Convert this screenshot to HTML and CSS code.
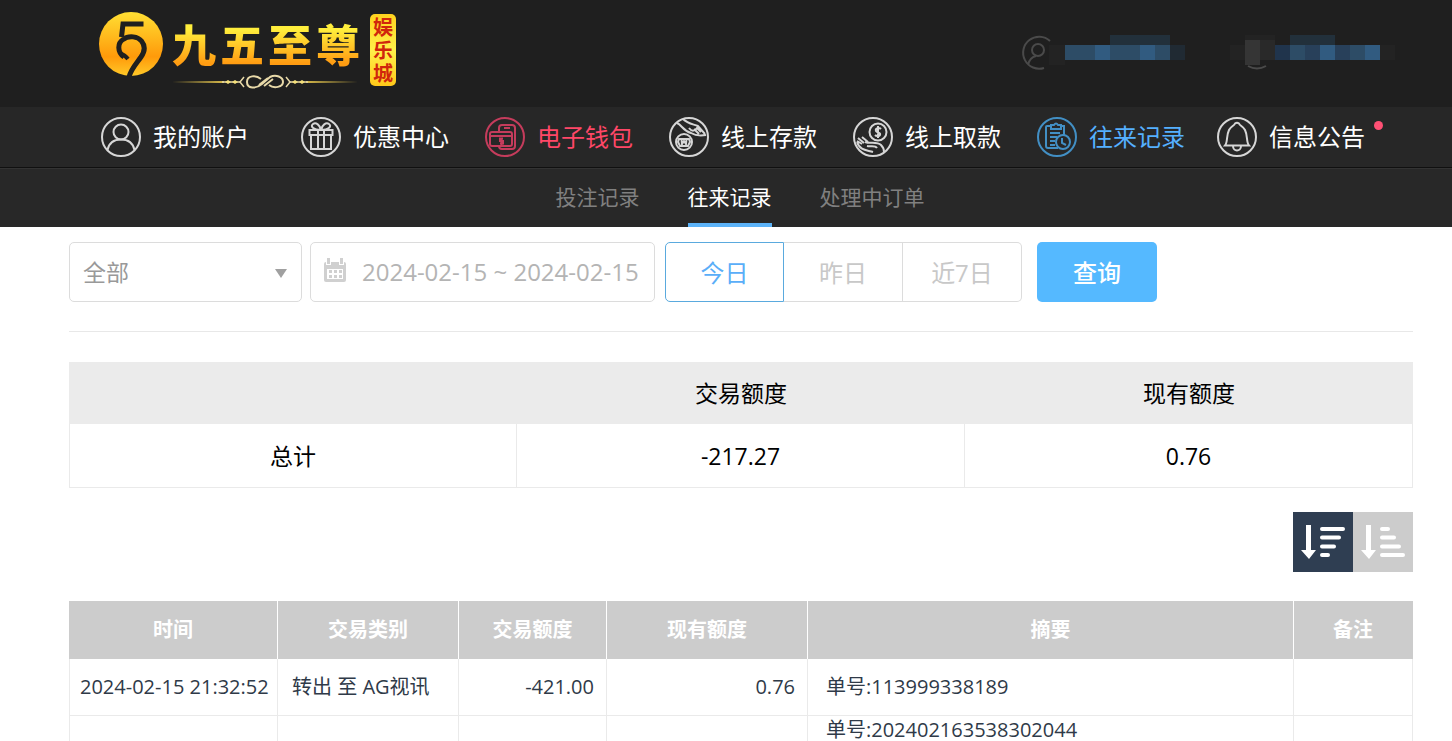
FILE: index.html
```html
<!DOCTYPE html>
<html lang="zh-CN">
<head>
<meta charset="utf-8">
<title>往来记录</title>
<link rel="stylesheet" href="styles.css">
</head>
<body>

<header class="header">
	<a class="logo" href="#home">
		<svg class="emblem" width="66" height="66" viewBox="0 0 66 66">
			<defs>
				<linearGradient id="gold" x1="0" y1="0" x2="0" y2="1">
					<stop offset="0" stop-color="#ffdf33"/>
					<stop offset=".7" stop-color="#ff9a0a"/>
					<stop offset="1" stop-color="#ffc928"/>
				</linearGradient>
			</defs>
			<circle cx="33" cy="33" r="32" fill="url(#gold)"/>
			<path d="M45.500 13H25L23.500 26M26 46C19 41 19.500 32 25 28.500C31 24 40 25.500 43.500 30C47.500 35 46.500 41 43 46C38 53 33 58 31 66" fill="none" stroke="#1f1f1f" stroke-width="5"/>
			<path d="M23 43Q27 44 30 48" fill="none" stroke="#1f1f1f" stroke-width="4"/>
		</svg>
		<span class="brand">
			<span class="brand-name"><span>九</span><span>五</span><span>至</span><span>尊</span></span>
			<svg class="ornament" width="186" height="16" viewBox="0 0 186 16" fill="none" stroke="#e8d9a8">
				<path d="M0 8L52 7V9ZM186 8L134 7V9Z" fill="#d9bb4a" stroke="none"/>
				<path d="M50 8H68M118 8H136" stroke-width="1.500"/>
				<path d="M56 6L59 8L56 10L53 8ZM63 6L66 8L63 10L60 8ZM130 6L133 8L130 10L127 8ZM123 6L126 8L123 10L120 8Z" fill="#f4df7a" stroke="none"/>
				<path d="M72 3L68 8L72 13M114 3L118 8L114 13" stroke-width="1.500"/>
				<path d="M89 5C84 1 75 1 75 8S84 15 90 10L98 3C104 0 111 3 111 8S102 15 97 11M87 11L96 4M92 12L101 5" stroke-width="2"/>
			</svg>
		</span>
		<span class="seal"><span>娱</span><span>乐</span><span>城</span></span>
	</a>
	<div class="user">
		<svg width="375" height="40" viewBox="0 0 375 40" shape-rendering="crispEdges">
			<g fill="none" stroke="#4a4a4a" stroke-width="2" shape-rendering="auto">
				<path d="M30 6A16 16 0 1 0 24 33M8 30C9 25 12 22 16 21"/>
				<circle cx="18" cy="15" r="6"/>
				<path d="M228 31Q237 36 246 31"/>
			</g>
			<path fill="#232323" d="M29 10h16v20H29zM210 10h15v15h-15zM360 10h15v15h-15zM225 0h30v5h-30z"/>
			<path fill="#353535" d="M225 5h15v25h-15z"/>
			<path fill="#292929" d="M240 5h15v20h-15z"/>
			<path fill="#22303b" d="M90 0h60v10H90zM270 0h45v10h-45z"/>
			<path fill="#202a33" d="M150 10h15v15h-15z"/>
			<path fill="#20344c" d="M255 10h15v15h-15z"/>
			<path fill="#2d4c66" d="M45 10h105v15H45zM270 10h90v15h-90z"/>
			<path fill="#28405a" d="M285 10h15v15h-15zM315 10h15v15h-15z"/>
			<path fill="#315b80" d="M75 10h15v15H75zM120 10h15v15h-15zM300 10h15v15h-15zM345 10h15v15h-15z"/>
		</svg>
	</div>
</header>

<nav class="nav">
	<a class="nav-item nav-first" href="#account">
		<svg class="icon" viewBox="0 0 40 40"><circle cx="20" cy="20" r="19"/><circle cx="20" cy="15" r="7.500"/><path d="M6.500 33C8 26 13 22.500 20 22.500S32 26 33.500 33"/></svg>
		<span>我的账户</span>
	</a>
	<a class="nav-item" href="#promo">
		<svg class="icon" viewBox="0 0 40 40"><circle cx="20" cy="20" r="19"/><path d="M8.500 13H31.500V18H8.500ZM10 18V32H30V18M17 13V32M23 13V32M20 13C12 13 9 9 12 7S19 8 20 13C21 8 25 5 28 7S28 13 20 13"/></svg>
		<span>优惠中心</span>
	</a>
	<a class="nav-item red" href="#wallet">
		<svg class="icon" viewBox="0 0 40 40"><circle cx="20" cy="20" r="19"/><path d="M14 15V11Q14 8 17 8H27Q30 8 30 11V29Q30 32 27 32H17Q14 32 14 29M19 11H25M5 17Q5 15 7 15H25Q27 15 27 17V27Q27 29 25 29H7Q5 29 5 27ZM5 19H27M18 21.500H15V24H18V26.500H15M16.500 20.500V28"/></svg>
		<span>电子钱包</span>
	</a>
	<a class="nav-item" href="#deposit">
		<svg class="icon" viewBox="0 0 40 40"><circle cx="20" cy="20" r="19"/><circle cx="15" cy="25" r="8"/><path d="M10 22H20L21 25L19 29H11L9 25ZM12.500 22L13 27L15 24L17 27L17.500 22M8 6C13 8 14 14 22 16C27 19 31 19 37 18M14 2C19 7 24 7 29 9L36 17M20 11C23 15 26 14 28 11L32 15M25 12L30 17"/></svg>
		<span>线上存款</span>
	</a>
	<a class="nav-item" href="#withdraw">
		<svg class="icon" viewBox="0 0 40 40"><circle cx="20" cy="20" r="19"/><circle cx="25" cy="15" r="8.500"/><path d="M28 12C26 10 22 11 23 14C24 16 28 15 27 18C26 20 23 19 22 18M25 9V21M4 24L9 27M5 21L11 26M9 20L15 25M4 25C7 34 14 33 20 35M12 25C17 27 24 24 28 28C31 31 31 33 31 35M14 29C18 30 22 28 24 31"/></svg>
		<span>线上取款</span>
	</a>
	<a class="nav-item blue" href="#records">
		<svg class="icon" viewBox="0 0 40 40"><circle cx="20" cy="20" r="19"/><path d="M14 9H10Q9 9 9 10V29Q9 31 11 31H21M24 9H27V18M14 8H17Q19 5 21 8H24V12H14ZM13 16H23M13 20H20M13 24H18M13 28H18M25 21V26L29 28"/><circle cx="26" cy="25" r="7"/></svg>
		<span>往来记录</span>
	</a>
	<a class="nav-item" href="#notice">
		<svg class="icon" viewBox="0 0 40 40"><circle cx="20" cy="20" r="19"/><path d="M8 28.500H32C29 25 31 19 28 13C26 9 23 9 22 6.500Q20 5 18 6.500C17 9 14 9 12 13C9 19 11 25 8 28.500ZM16 29C16 35 24 35 24 29"/></svg>
		<span>信息公告</span>
		<i class="dot"></i>
	</a>
</nav>

<nav class="subnav">
	<a href="#bets">投注记录</a>
	<a class="active" href="#records">往来记录</a>
	<a href="#pending">处理中订单</a>
</nav>

<main class="content">
	<form class="filters">
		<div class="select">
			<select aria-label="交易类别"><option>全部</option></select>
		</div>
		<label class="date">
			<svg width="26" height="26" viewBox="0 0 26 26">
				<path fill="#d0d0d0" d="M3 4H21Q23 4 23 6V22Q23 24 21 24H3Q1 24 1 22V6Q1 4 3 4Z"/>
				<path fill="#fff" d="M4 11H20V21H4ZM3 0H8V7H3ZM16 0H21V7H16Z"/>
				<path fill="#d0d0d0" d="M4 0H7V6H4ZM17 0H20V6H17ZM6 12h3v3H6zM11 12h3v3h-3zM16 12h3v3h-3zM6 17h3v3H6zM11 17h3v3h-3zM16 17h3v3h-3z"/>
			</svg>
			<input type="text" aria-label="日期" value="2024-02-15 ~ 2024-02-15">
		</label>
		<div class="days">
			<button type="button" class="active">今日</button>
			<button type="button">昨日</button>
			<button type="button">近7日</button>
		</div>
		<button type="button" class="query">查询</button>
	</form>

	<table class="summary">
		<thead>
			<tr><th></th><th>交易额度</th><th>现有额度</th></tr>
		</thead>
		<tbody>
			<tr><td>总计</td><td>-217.27</td><td>0.76</td></tr>
		</tbody>
	</table>

	<div class="sort">
		<button type="button" class="active" aria-label="降序">
			<svg width="60" height="60" viewBox="0 0 60 60"><path d="M13 13H18V38H23L16 47L8 38H13Z"/><path class="bars" d="M29 17H50M29 25.500H46M29 34.500H41M29 43H35"/></svg>
		</button>
		<button type="button" aria-label="升序">
			<svg width="60" height="60" viewBox="0 0 60 60"><path d="M13 13H18V38H23L16 47L8 38H13Z"/><path class="bars" d="M29 17H35M29 25.500H41M29 34.500H46M29 43H50"/></svg>
		</button>
	</div>

	<table class="records">
		<colgroup>
			<col class="c-time"><col class="c-type"><col class="c-amount"><col class="c-balance"><col><col class="c-remark">
		</colgroup>
		<thead>
			<tr><th>时间</th><th>交易类别</th><th>交易额度</th><th>现有额度</th><th>摘要</th><th>备注</th></tr>
		</thead>
		<tbody>
			<tr>
				<td class="time">2024-02-15 21:32:52</td>
				<td>转出 至 AG视讯</td>
				<td class="num">-421.00</td>
				<td class="num">0.76</td>
				<td class="memo">单号:113999338189</td>
				<td></td>
			</tr>
			<tr class="multi">
				<td></td>
				<td></td>
				<td></td>
				<td></td>
				<td class="memo">单号:202402163538302044</td>
				<td></td>
			</tr>
		</tbody>
	</table>
</main>

</body>
</html>
```
FILE: styles.css
```css
* {
	box-sizing: border-box;
}
body {
	margin: 0;
	background: #fff;
	color: #000;
	font-family: "Open Sans", "Noto Sans CJK SC", sans-serif;
	font-size: 20px;
}
a {
	color: inherit;
	text-decoration: none;
}
button, input, select {
	font: inherit;
	color: inherit;
	margin: 0;
	padding: 0;
	border: 0;
	background: none;
}

/* header */
.header {
	display: flex;
	justify-content: space-between;
	height: 107px;
	padding: 11px 57px 0 98px;
	background: #1f1f1f;
}
.logo {
	display: flex;
	align-items: flex-start;
}
.brand {
	display: flex;
	flex-direction: column;
	gap: 3px;
	margin: 8px 0 0 8px;
}
.brand-name {
	display: flex;
	gap: 4px;
	font-size: 44px;
	font-weight: 900;
	line-height: 52px;
}
.brand-name span {
	background: linear-gradient(#ffee3c 20%, #ff9c12 85%);
	-webkit-background-clip: text;
	background-clip: text;
	color: transparent;
}
.seal {
	display: flex;
	flex-direction: column;
	align-items: center;
	gap: 3px;
	width: 26px;
	margin: 3px 0 0 10px;
	padding: 3px 0;
	border-radius: 5px;
	background: linear-gradient(#ffd21e, #fff04a 50%, #ffc81a);
	color: #d0260c;
	font-family: "Noto Sans CJK SC", sans-serif;
	font-size: 20px;
	font-weight: 700;
	line-height: 20px;
}
.user {
	padding-top: 24px;
}

/* main menu */
.nav {
	display: flex;
	gap: 36px;
	height: 61px;
	padding: 0 0 1px 101px;
	background: #272727;
	border-bottom: 1px solid #101010;
	color: #fff;
	font-size: 24px;
	line-height: 32px;
}
.nav-item {
	display: flex;
	align-items: center;
	gap: 12px;
	position: relative;
	white-space: nowrap;
}
.nav-first {
	margin-right: 16px;
}
.icon {
	width: 40px;
	height: 40px;
	fill: none;
	stroke: #d6d6d6;
	stroke-width: 2;
}
.nav-item:last-child {
	margin-left: -4px;
}
.red {
	color: #ff4767;
}
.red .icon {
	stroke: #c53c5c;
}
.blue {
	color: #55b0ff;
}
.blue .icon {
	stroke: #428fc4;
}
.dot {
	position: absolute;
	top: 14px;
	right: -18px;
	width: 9px;
	height: 9px;
	border-radius: 50%;
	background: #ff5074;
}

.subnav {
	display: flex;
	justify-content: center;
	gap: 48px;
	height: 59px;
	padding-left: 28px;
	background: #282828;
	border-top: 1px solid #333;
	color: #808080;
	font-size: 21px;
	line-height: 56px;
}
.subnav .active {
	color: #fff;
	border-bottom: 4px solid #5cb3f8;
}

/* filters */
.content {
	padding: 15px 39px 0 69px;
}
.filters {
	display: flex;
	padding-bottom: 29px;
	border-bottom: 1px solid #e8e8e8;
	font-size: 24px;
}
.select {
	position: relative;
	width: 233px;
	height: 60px;
	margin-right: 8px;
}
.select select {
	width: 100%;
	height: 100%;
	padding: 0 13px;
	appearance: none;
	border: 1px solid #dcdcdc;
	border-radius: 5px;
	color: #999;
	font-size: 23px;
}
.select::after {
	content: "";
	position: absolute;
	top: 27px;
	right: 15px;
	border: 6px solid transparent;
	border-top: 9px solid #a0a0a0;
	border-bottom: 0;
	pointer-events: none;
}
.date {
	display: flex;
	align-items: center;
	gap: 13px;
	width: 345px;
	height: 60px;
	margin-right: 10px;
	padding: 0 0 2px 12px;
	border: 1px solid #dcdcdc;
	border-radius: 5px;
	color: #b4b4b4;
}
.date input {
	flex: 1;
	min-width: 0;
}
.days {
	display: flex;
	margin-right: 15px;
	color: #c8c8c8;
}
.days button {
	width: 119px;
	height: 60px;
	padding-bottom: 2px;
	border: 1px solid #dcdcdc;
	border-left-width: 0;
}
.days button:last-child {
	border-radius: 0 5px 5px 0;
}
.days .active {
	border: 1px solid #5aaade;
	border-radius: 5px 0 0 5px;
	color: #5aaef8;
}
.query {
	width: 120px;
	height: 60px;
	padding-bottom: 2px;
	border-radius: 5px;
	background: #55b9ff;
	color: #fff;
	font-weight: 500;
}

/* totals */
.summary {
	width: 100%;
	margin-top: 30px;
	border-spacing: 0;
	table-layout: fixed;
	font-size: 23px;
	line-height: 32px;
	text-align: center;
}
.summary th {
	height: 62px;
	padding: 0;
	background: #ebebeb;
	font-weight: 400;
}
.summary td {
	height: 64px;
	padding: 0;
	border-right: 1px solid #eaeaea;
	border-bottom: 1px solid #eaeaea;
}
.summary td:first-child {
	border-left: 1px solid #eaeaea;
}

.sort {
	display: flex;
	justify-content: flex-end;
	margin: 24px 0 29px;
}
.sort button {
	width: 60px;
	height: 60px;
	background: #ccc;
}
.sort .active {
	background: #2f3e52;
}
.sort svg {
	display: block;
	fill: #fff;
}
.sort .bars {
	stroke: #fff;
	stroke-width: 4;
	stroke-linecap: round;
}

/* records */
.records {
	width: 100%;
	border-spacing: 0;
	table-layout: fixed;
	color: #2f3a48;
	line-height: 28px;
}
.c-time {
	width: 209px;
}
.c-type {
	width: 181px;
}
.c-amount {
	width: 148px;
}
.c-balance {
	width: 201px;
}
.c-remark {
	width: 119px;
}
.records th {
	height: 58px;
	padding: 0;
	background: #ccc;
	border-right: 1px solid #fff;
	color: #fff;
	font-weight: 700;
}
.records th:last-child {
	border-right-color: #ccc;
}
.records td {
	height: 57px;
	padding: 0 14px;
	border-right: 1px solid #eaeaea;
	border-bottom: 1px solid #eaeaea;
	white-space: nowrap;
}
.records td:first-child {
	border-left: 1px solid #eaeaea;
}
.records .time {
	padding: 0 0 0 10px;
}
.records .num {
	padding: 0 12px;
	text-align: right;
}
.records .memo {
	padding-left: 18px;
}
.multi td {
	vertical-align: top;
}
```
